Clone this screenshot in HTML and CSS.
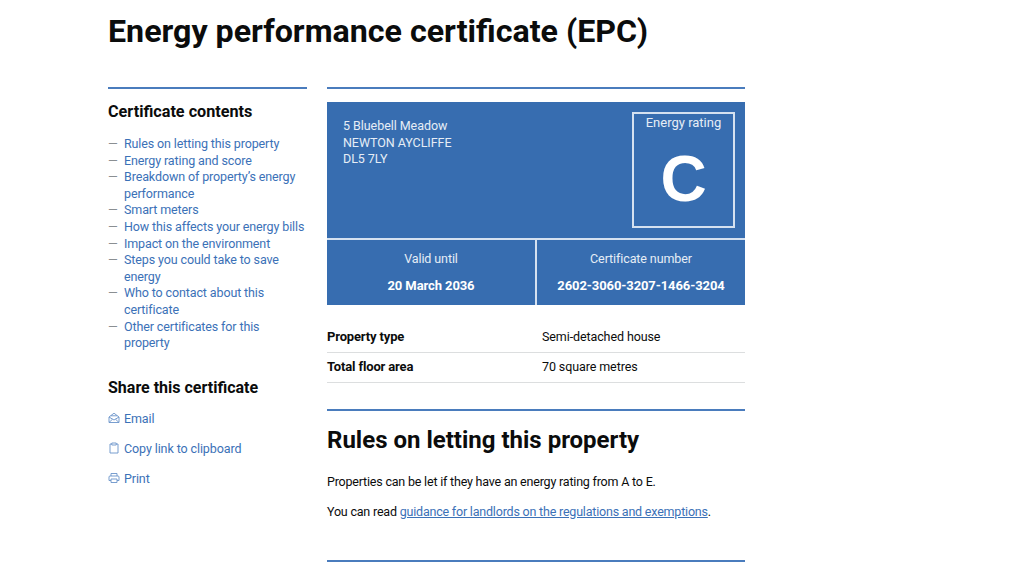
FILE: index.html
```html
<!DOCTYPE html>
<html lang="en">
<head>
    <meta charset="UTF-8">
    <title>Energy performance certificate (EPC)</title>
    <link rel="stylesheet" href="styles.css">
</head>
<body>
    <main class="page">
        <h1 class="page-title">Energy performance certificate (EPC)</h1>

        <div class="columns">
            <!-- Sidebar -->
            <aside class="sidebar">
                <h2 class="sidebar-title">Certificate contents</h2>
                <ul class="contents-list">
                    <li><a href="#">Rules on letting this property</a></li>
                    <li><a href="#">Energy rating and score</a></li>
                    <li><a href="#">Breakdown of property’s energy performance</a></li>
                    <li><a href="#">Smart meters</a></li>
                    <li><a href="#">How this affects your energy bills</a></li>
                    <li><a href="#">Impact on the environment</a></li>
                    <li><a href="#">Steps you could take to save energy</a></li>
                    <li><a href="#">Who to contact about this certificate</a></li>
                    <li><a href="#">Other certificates for this property</a></li>
                </ul>

                <h2 class="share-title">Share this certificate</h2>
                <ul class="share-list">
                    <li>
                        <svg class="share-icon" viewBox="0 0 12 12"><path d="M1 5 L6 1.2 L11 5 V10.5 H1 Z M1 5 L6 8 L11 5 M1 10.5 L4.5 7.2 M11 10.5 L7.5 7.2 M2.8 3.8 H9.2"/></svg>
                        <a href="#">Email</a>
                    </li>
                    <li>
                        <svg class="share-icon" viewBox="0 0 12 12"><path d="M3.8 2 H2 V11 H10 V2 H8.2 M3.8 1 H8.2 V3 H3.8 Z"/></svg>
                        <a href="#">Copy link to clipboard</a>
                    </li>
                    <li>
                        <svg class="share-icon" viewBox="0 0 12 12"><path d="M3 4 V1.5 H9 V4 M3 8.5 H1 V5 Q1 4 2 4 H10 Q11 4 11 5 V8.5 H9 M3 7 H9 V10.5 H3 Z"/></svg>
                        <a href="#">Print</a>
                    </li>
                </ul>
            </aside>

            <!-- Certificate -->
            <section class="content">
                <div class="epc-card">
                    <div class="epc-top">
                        <div class="epc-address">5 Bluebell Meadow<br>NEWTON AYCLIFFE<br>DL5 7LY</div>
                        <div class="epc-rating">
                            <div class="epc-rating-label">Energy rating</div>
                            <div class="epc-rating-letter">C</div>
                        </div>
                    </div>
                    <div class="epc-bottom">
                        <div class="epc-cell">
                            <div class="epc-cell-label">Valid until</div>
                            <div class="epc-cell-value">20 March 2036</div>
                        </div>
                        <div class="epc-cell">
                            <div class="epc-cell-label">Certificate number</div>
                            <div class="epc-cell-value">2602-3060-3207-1466-3204</div>
                        </div>
                    </div>
                </div>

                <dl class="summary">
                    <div class="summary-row">
                        <dt>Property type</dt>
                        <dd>Semi-detached house</dd>
                    </div>
                    <div class="summary-row">
                        <dt>Total floor area</dt>
                        <dd>70 square metres</dd>
                    </div>
                </dl>

                <div class="rules">
                    <h2 class="section-title">Rules on letting this property</h2>
                    <p>Properties can be let if they have an energy rating from A to E.</p>
                    <p>You can read <a class="inline-link" href="#">guidance for landlords on the regulations and exemptions</a>.</p>
                </div>

                <div class="next-section"></div>
            </section>
        </div>
    </main>
</body>
</html>
```

FILE: styles.css
```css
* {
    margin: 0;
    padding: 0;
    box-sizing: border-box;
}

body {
    background-color: #fff;
    color: #0b0c0c;
    font-family: Roboto, Arial, sans-serif;
    font-size: 12.5px;
    line-height: 16.6px;
    overflow: hidden;
}

a {
    color: #3b71b7;
    text-decoration: none;
}

.page {
    width: 637px;
    margin-left: 108px;
}

.page-title {
    font-size: 32.2px;
    line-height: 38px;
    font-weight: 700;
    padding-top: 12px;
}

.columns {
    display: flex;
    gap: 20px;
    margin-top: 37px;
}

.sidebar {
    width: 199px;
    flex-shrink: 0;
    border-top: 2px solid #4a7cbd;
}

.sidebar-title,
.share-title {
    line-height: 20px;
    font-weight: 700;
}

.sidebar-title {
    font-size: 16.2px;
    margin-top: 13px;
}

.contents-list {
    list-style: none;
    margin-top: 14px;
}

.contents-list li {
    position: relative;
    padding-left: 16px;
    letter-spacing: -0.12px;
}

.contents-list li::before {
    content: "—";
    position: absolute;
    left: 0;
    color: #8a8f92;
}

.share-title {
    font-size: 16px;
    margin-top: 26px;
}

.share-list {
    list-style: none;
    margin-top: 7px;
}

.share-list li {
    display: flex;
    align-items: center;
    gap: 4px;
    height: 30px;
    letter-spacing: -0.1px;
}

.share-icon {
    width: 12px;
    height: 12px;
    margin-top: -3px;
    fill: none;
    stroke: #6a93c9;
    stroke-width: 0.9;
}

.content {
    width: 419px;
    border-top: 2px solid #4a7cbd;
}

.epc-card {
    margin-top: 13px;
    background-color: #376db0;
    color: #fff;
}

.epc-top {
    display: flex;
    justify-content: space-between;
    height: 138px;
    padding: 10px 10px 10px 16px;
    border-bottom: 2px solid #d5e1f0;
}

.epc-address {
    padding-top: 6px;
    color: #e6edf6;
    letter-spacing: -0.05px;
}

.epc-rating {
    width: 103px;
    height: 116px;
    border: 2px solid #d5e1f0;
    text-align: center;
}

.epc-rating-label {
    padding-top: 1px;
    font-size: 13px;
    color: #e6edf6;
}

.epc-rating-letter {
    font-family: "Liberation Sans", Arial, sans-serif;
    font-size: 64px;
    line-height: 68px;
    font-weight: 700;
    margin-top: 13px;
}

.epc-bottom {
    display: flex;
    height: 65px;
}

.epc-cell {
    flex: 1;
    text-align: center;
    padding-top: 11px;
}

.epc-cell + .epc-cell {
    border-left: 2px solid #d5e1f0;
}

.epc-cell-label {
    color: #e6edf6;
    letter-spacing: -0.1px;
}

.epc-cell-value {
    font-size: 13px;
    font-weight: 700;
    letter-spacing: -0.1px;
    margin-top: 10px;
}

.summary {
    margin-top: 18px;
}

.summary-row {
    display: flex;
    align-items: center;
    height: 30px;
    border-bottom: 1px solid #dcdedf;
}

.summary-row dt {
    width: 215px;
    font-size: 13px;
    font-weight: 700;
    letter-spacing: -0.15px;
}

.summary-row dd {
    letter-spacing: -0.1px;
}

.rules {
    margin-top: 26px;
    border-top: 2px solid #4a7cbd;
}

.section-title {
    font-size: 24px;
    line-height: 30px;
    font-weight: 700;
    margin-top: 14px;
    margin-bottom: 19px;
}

.rules p {
    margin-bottom: 13px;
    letter-spacing: -0.2px;
}

.inline-link {
    text-decoration: underline;
}

.next-section {
    margin-top: 40px;
    border-top: 2px solid #4a7cbd;
}
```
